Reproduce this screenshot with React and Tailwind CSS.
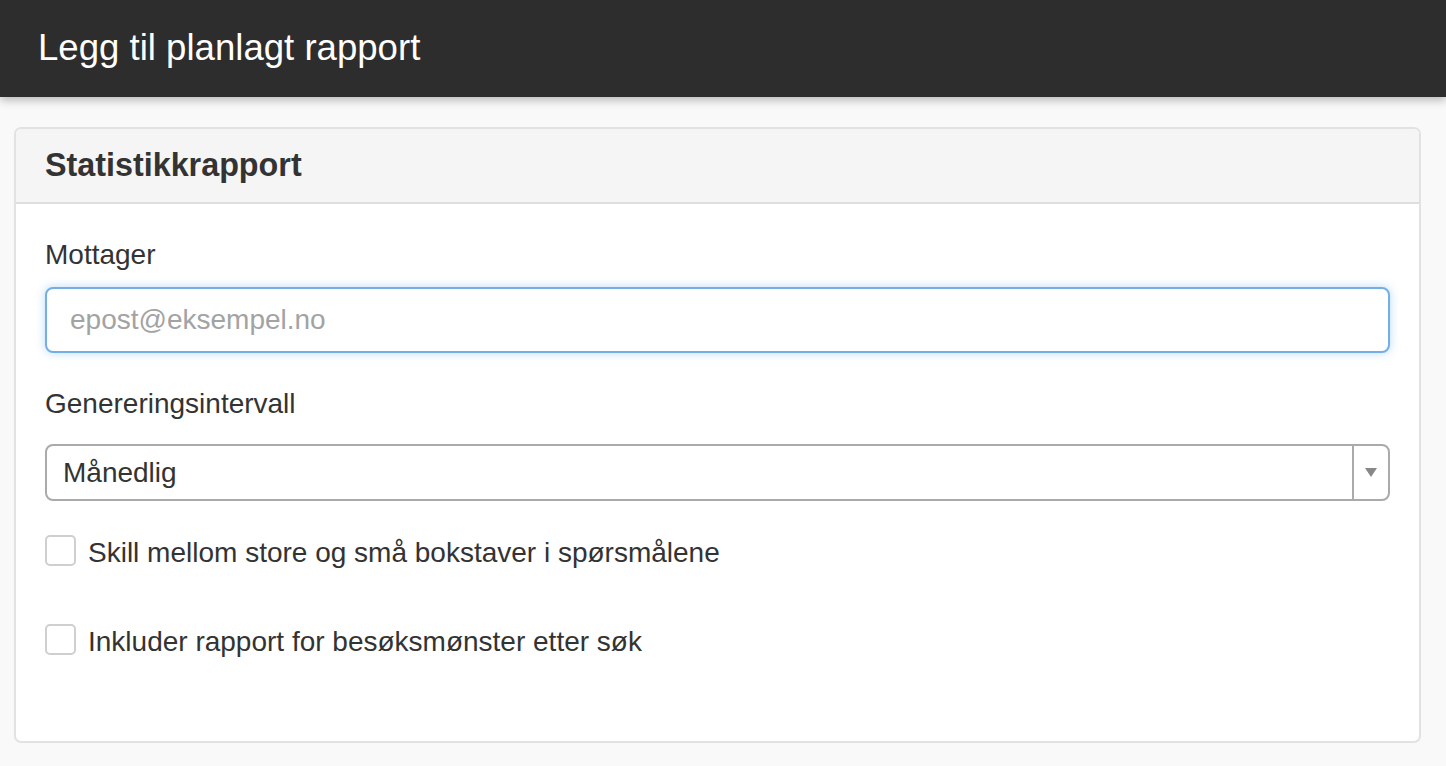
import { useState } from 'react'

const checks = [
  { id: 'case', label: 'Skill mellom store og små bokstaver i spørsmålene' },
  { id: 'pattern', label: 'Inkluder rapport for besøksmønster etter søk' },
]

export default function App() {
  const [email, setEmail] = useState('')
  const [interval, setInterval] = useState('Månedlig')
  const [checked, setChecked] = useState({})

  return (
    <div className="min-h-screen bg-[#f9f9f9] font-['Liberation_Sans',Arial,sans-serif] text-[#333]">
      {/* Top bar */}
      <header className="relative z-10 h-[97px] bg-[#2d2d2d] flex items-center pl-[38px] shadow-[0_3px_9px_rgba(0,0,0,0.28)]">
        <h1 className="text-[36.6px] leading-none text-white">Legg til planlagt rapport</h1>
      </header>

      <div className="pt-[30px] pl-[14px] pr-[25px]">
        <div className="rounded-[7px] border-2 border-[#e2e2e2] bg-white overflow-hidden">
          {/* Card heading */}
          <div className="h-[75px] bg-[#f5f5f5] border-b-2 border-[#dedede] flex items-center px-[29px]">
            <h2 className="text-[32.3px] font-bold leading-none text-[#333]">Statistikkrapport</h2>
          </div>

          {/* Form */}
          <div className="px-[29px] pt-[31px] pb-[79px]">
            <label className="block text-[28px] leading-[40px] mb-[12px]">Mottager</label>
            <input
              value={email}
              onChange={(e) => setEmail(e.target.value)}
              placeholder="epost@eksempel.no"
              className="block w-full h-[66px] rounded-[8px] border-2 border-[#74aee6] bg-white px-[23px] text-[28px] text-[#333] placeholder-[#a3a3a3] outline-none shadow-[0_0_10px_rgba(102,175,233,0.45)]"
            />

            <label className="block mt-[31px] text-[28px] leading-[40px] mb-[20px]">Genereringsintervall</label>
            <div className="relative flex h-[57px] rounded-[8px] border-2 border-[#aaa] bg-white">
              <div className="flex-1 flex items-center pl-[16px] text-[28px] text-[#333]">{interval}</div>
              <div className="w-[36px] border-l-2 border-[#aaa] flex items-center justify-center">
                <svg width="12" height="9" viewBox="0 0 12 9">
                  <path d="M0 0 L12 0 L6 9 Z" fill="#888" />
                </svg>
              </div>
              <select
                value={interval}
                onChange={(e) => setInterval(e.target.value)}
                className="absolute inset-0 opacity-0 cursor-pointer"
              >
                <option>Daglig</option>
                <option>Ukentlig</option>
                <option>Månedlig</option>
              </select>
            </div>

            <div className="mt-[32px] flex flex-col gap-[49px]">
              {checks.map(({ id, label }) => (
                <label key={id} className="flex items-start gap-[12px] cursor-pointer">
                  <span
                    onClick={() => setChecked(c => ({ ...c, [id]: !c[id] }))}
                    className="mt-[2px] w-[31px] h-[31px] shrink-0 rounded-[5px] border-2 border-[#cfcfcf] bg-white flex items-center justify-center"
                  >
                    {checked[id] && (
                      <svg width="18" height="18" viewBox="0 0 18 18">
                        <path d="M3 9 L7.5 13.5 L15 4.5" stroke="#333" strokeWidth="2.5" fill="none" />
                      </svg>
                    )}
                  </span>
                  <span className="text-[28px] leading-[40px]">{label}</span>
                </label>
              ))}
            </div>
          </div>
        </div>
      </div>
    </div>
  )
}
